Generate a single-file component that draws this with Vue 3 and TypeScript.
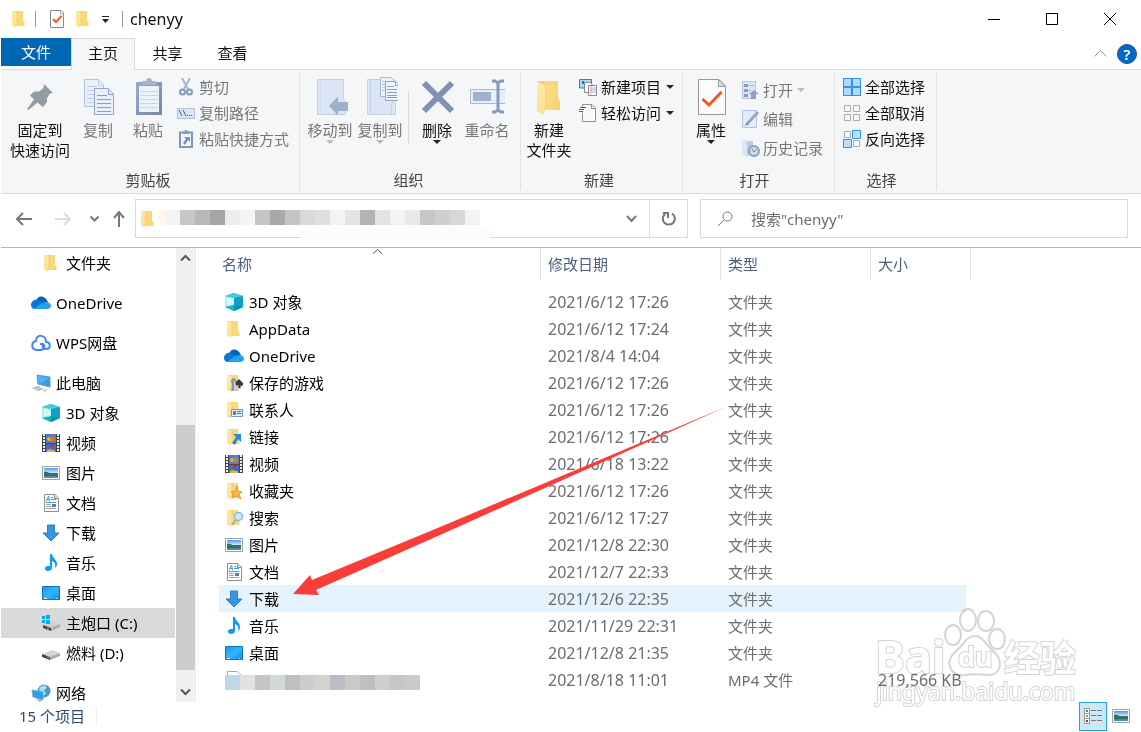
<script setup lang="ts">
import { ref } from 'vue'

interface NavItem { icon: string; label: string; root?: boolean; selected?: boolean }
interface FileRow { icon: string; name: string; date: string; type: string; size?: string; hidden?: boolean }

const tabs: string[] = ['主页', '共享', '查看']
const activeTab = ref('主页')
const query = ref('')
const selectedFile = ref('下载')

const navItems: NavItem[] = [
  { icon: 'folder', label: '文件夹' },
  { icon: 'onedrive', label: 'OneDrive', root: true },
  { icon: 'wps', label: 'WPS网盘', root: true },
  { icon: 'pc', label: '此电脑', root: true },
  { icon: 'cube', label: '3D 对象' },
  { icon: 'video', label: '视频' },
  { icon: 'picture', label: '图片' },
  { icon: 'document', label: '文档' },
  { icon: 'download', label: '下载' },
  { icon: 'music', label: '音乐' },
  { icon: 'desktop', label: '桌面' },
  { icon: 'drive-c', label: '主炮口 (C:)', selected: true },
  { icon: 'drive', label: '燃料 (D:)' },
  { icon: 'network', label: '网络', root: true },
]

const files: FileRow[] = [
  { icon: 'cube', name: '3D 对象', date: '2021/6/12 17:26', type: '文件夹' },
  { icon: 'folder', name: 'AppData', date: '2021/6/12 17:24', type: '文件夹' },
  { icon: 'onedrive', name: 'OneDrive', date: '2021/8/4 14:04', type: '文件夹' },
  { icon: 'games', name: '保存的游戏', date: '2021/6/12 17:26', type: '文件夹' },
  { icon: 'contacts', name: '联系人', date: '2021/6/12 17:26', type: '文件夹' },
  { icon: 'links', name: '链接', date: '2021/6/12 17:26', type: '文件夹' },
  { icon: 'video', name: '视频', date: '2021/6/18 13:22', type: '文件夹' },
  { icon: 'favorites', name: '收藏夹', date: '2021/6/12 17:26', type: '文件夹' },
  { icon: 'searches', name: '搜索', date: '2021/6/12 17:27', type: '文件夹' },
  { icon: 'picture', name: '图片', date: '2021/12/8 22:30', type: '文件夹' },
  { icon: 'document', name: '文档', date: '2021/12/7 22:33', type: '文件夹' },
  { icon: 'download', name: '下载', date: '2021/12/6 22:35', type: '文件夹' },
  { icon: 'music', name: '音乐', date: '2021/11/29 22:31', type: '文件夹' },
  { icon: 'desktop', name: '桌面', date: '2021/12/8 21:35', type: '文件夹' },
  { icon: 'blank', name: '', date: '2021/8/18 11:01', type: 'MP4 文件', size: '219,566 KB', hidden: true },
]

const pathMosaic: string[] = [
  '#f3f3f3', '#c6c6c6', '#b8b8b8', '#a5a5a5', '#ececec', '#f5f5f5', '#c5c5c5', '#a9a9a9', '#c5c5c5', '#d9d9d9', '#dfdfdf',
  '#f3f3f3', '#e4e4e4', '#b3b3b3', '#e3e3e3', '#f3f3f3', '#e9e9e9', '#c7c7c7', '#cfcfcf', '#d7d7d7', '#f3f3f3',
]
const nameMosaic: string[] = [
  '#bfd8e7', '#e3e2e0', '#c5c5c6', '#d3d7d7', '#c0bfbd', '#cdcdcb', '#d2d3d1', '#bcbdc4', '#c9cac7', '#c0bfbd', '#ccd0d0',
  '#c5c6c6', '#c9cacc',
]
</script>

<template>
  <svg class="symbols" width="0" height="0" aria-hidden="true">
    <defs>
      <linearGradient id="g-fold" x1="0" x2="1"><stop offset="0" stop-color="#eec468" /><stop offset=".5" stop-color="#fadb7e" /><stop offset="1" stop-color="#f8d370" /></linearGradient>
      <linearGradient id="g-flap" x1="0" y1="0" x2="0" y2="1"><stop offset="0" stop-color="#ffeaa6" /><stop offset="1" stop-color="#ffdf8d" /></linearGradient>
      <linearGradient id="g-dim" x1="0" y1="0" x2="1" y2="1"><stop offset="0" stop-color="#9aaaca" /><stop offset="1" stop-color="#7386ae" /></linearGradient>
      <linearGradient id="g-sky" x1="0" y1="0" x2="0" y2="1"><stop offset="0" stop-color="#4f97e6" /><stop offset=".5" stop-color="#d3ebf9" /><stop offset=".55" stop-color="#397c64" /><stop offset="1" stop-color="#4e92c0" /></linearGradient>
      <linearGradient id="g-screen" x1="0" y1="0" x2="1" y2="1"><stop offset="0" stop-color="#1a97f2" /><stop offset=".5" stop-color="#35b2ff" /><stop offset="1" stop-color="#1093f0" /></linearGradient>
    </defs>
    <symbol id="folder" viewBox="0 0 18 18"><path d="M4 1H13V11L14.5 12V16H6Z" fill="url(#g-fold)" /><path d="M2 0.5L6.5 2V16L5 17.5L2 15.5Z" fill="url(#g-flap)" /></symbol>
    <symbol id="cube" viewBox="0 0 18 18"><path d="M9 0L18 3V14L9 18L0 14V3Z" fill="#22b9ce" /><path d="M0 3L9 5V13L0 14Z" fill="#b4f0f3" /><path d="M9 5L18 3V14L9 12Z" fill="#0aa0c8" /><path d="M0 3L9 0L18 3L9 5Z" fill="#47cadb" /><path d="M0 14L9 12L18 14L9 18Z" fill="#18b3c4" /><path d="M9 12L18 14L9 18Z" fill="#0b91a8" /><path d="M2 5L8 6V11L2 12Z" fill="#d8f8f8" /></symbol>
    <symbol id="onedrive" viewBox="0 0 20 18"><path d="M5 7C6 3 10 1 14 4C16 5 16 7 17 8L10 12Z" fill="#0864b7" /><path d="M0 11C0 7 4 5 7 6L15 11L11 15H4C2 15 0 14 0 11Z" fill="#0878d4" /><path d="M4 15C5 12 11 9 15 8C18 8 20 10 20 12C20 14 18 15 16 15Z" fill="#22a2ed" /></symbol>
    <symbol id="wps" viewBox="0 0 20 18"><path d="M12 10C11 12 12 15 15 15C20 15 20 8 15 8C15 0 5 0 5 7C0 8 0 15 5 16H9C13 16 15 12 12 10H9" fill="none" stroke="#4286f5" stroke-width="2" /></symbol>
    <symbol id="pc" viewBox="0 0 20 18"><path d="M6 1L19 3V13L7 10Z" fill="#3a9be8" stroke="#7195b0" /><path d="M7 2L18 4L10 9H7Z" fill="#47b5f7" /><path d="M0 14L7 12L14 15L7 17Z" fill="#d6d9dc" /><path d="M3 14L9 13M6 16L11 15" stroke="#9fa7ae" /><path d="M12 16L17 15L14 18Z" fill="#c1c4c8" /></symbol>
    <symbol id="video" viewBox="0 0 18 18"><path d="M0 0H18V18H0Z" fill="#444" /><path d="M4 0H14V9H4Z" fill="#537cc8" /><path d="M4 10H14V18H4Z" fill="#426dc2" /><path d="M2 0V18M16 0V18" stroke="#eee" stroke-width="2" stroke-dasharray="2 1" /><path d="M9 2L13 3V7L10 8L7 6Z" fill="#c98125" /><path d="M5 4L7 3L9 6L6 7Z" fill="#e2bc41" /><path d="M8 9L12 10L10 14Z" fill="#be2d2a" /><path d="M5 16C9 14 11 17 13 16V18H5Z" fill="#d7ba3e" /></symbol>
    <symbol id="picture" viewBox="0 0 18 18"><path d="M.5 2.5H17.5V15.5H.5Z" fill="#fff" stroke="#a0a0a0" /><path d="M2 4H16V14H2Z" fill="url(#g-sky)" /><path d="M2 8C6 7 8 11 16 10V12H2Z" fill="#386e62" /></symbol>
    <symbol id="document" viewBox="0 0 18 18"><path d="M2.5 .5H13L16.5 4V17.5H2.5Z" fill="#fff" stroke="#8e8e8e" /><path d="M12.5 .5V4.5H16.5" fill="#ddd" stroke="#8e8e8e" /><path d="M4 7.500L6.500 2L7.500 7.500M5 5.500H8M9 3.500H11M9 5.500H14M4 8.500H14" stroke="#4a9fd0" fill="none" /><path d="M4 10.500H9M4 12.500H9M4 14.500H14" stroke="#a2a2a2" /><path d="M10 10H14V13H10Z" fill="#4b83a1" /></symbol>
    <symbol id="download" viewBox="0 0 18 18"><path d="M5.500 1H12.500V9H17L9 17L1 9H5.500Z" fill="#3795e3" stroke="#2f7fc9" /></symbol>
    <symbol id="music" viewBox="0 0 18 18"><path d="M8 0H10C10 4 15 5 15 10C15 12 14 13 13 14C14 9 12 8 10 7V14C10 16 8 17 6 17C2 17 2 12 6 12H8Z" fill="#079cf5" /></symbol>
    <symbol id="desktop" viewBox="0 0 18 18"><path d="M.5 2.500H17.500V15.500H.5Z" fill="url(#g-screen)" stroke="#0876be" /><path d="M2 14.500H5M14 14.500H15" stroke="#fff" /></symbol>
    <symbol id="drive" viewBox="0 0 18 18"><path d="M0 10L10 6L18 9L8 14Z" fill="#d5d5d5" /><path d="M0 10L8 13V16L0 13Z" fill="#454545" /><path d="M8 13L18 9V12L8 16Z" fill="#aaa" /><path d="M5 13L7 14" stroke="#67d55c" /></symbol>
    <symbol id="drive-c" viewBox="0 0 18 18"><path d="M0 11L10 7L18 10L8 15Z" fill="#d0d0d0" /><path d="M1 11L9 14V17L1 14Z" fill="#454545" /><path d="M9 14L18 10V13L9 17Z" fill="#aaa" /><path d="M0 2H3V5H0ZM4 1H8V5H4ZM0 6H3V9H0ZM4 6H8V10H4Z" fill="#00aeeb" /><path d="M5 14L7 15" stroke="#67d55c" /></symbol>
    <symbol id="network" viewBox="0 0 20 18"><circle cx="13" cy="7" r="6.500" fill="#4698ca" /><path d="M9 3L14 1L16 4L13 6L15 10L12 12L11 8L8 6Z" fill="#b2dbe8" /><path d="M1 6L12 8V16L2 13Z" fill="#26a0ed" stroke="#6aaede" /><path d="M5 15L11 16L9 18Z" fill="#9aabb6" /></symbol>
    <symbol id="games" viewBox="0 0 18 18"><use href="#folder" width="18" height="18" /><path d="M6 7C6 4 10 3 11 6C12 8 10 9 11 11L13 17H6L7 11Z" fill="#8296a9" /><path d="M9 6L12 12L13 17H9Z" fill="#c4cdd4" /><path d="M14 5L18 9C19 12 16 13 15 11L16 14H13L14 11C12 13 10 11 11 8Z" fill="#383838" /></symbol>
    <symbol id="contacts" viewBox="0 0 18 18"><use href="#folder" width="18" height="18" /><path d="M6.500 8.500H17.500V15.500H6.500Z" fill="#e2f2fb" stroke="#6b9dbd" /><path d="M8 10H11V14H8Z" fill="#5d839e" /><path d="M12 10.500H16M12 12.500H16" stroke="#2a75ab" /></symbol>
    <symbol id="links" viewBox="0 0 18 18"><use href="#folder" width="18" height="18" /><path d="M8 6H16V14L13 11L10 17L7 15L11 9Z" fill="#258bda" /></symbol>
    <symbol id="favorites" viewBox="0 0 18 18"><use href="#folder" width="18" height="18" /><path d="M12 4L13 9L17 10L14 12L16 17L11 14L7 16L8 12L6 10L10 9Z" fill="#ffb547" stroke="#ef9532" /></symbol>
    <symbol id="searches" viewBox="0 0 18 18"><use href="#folder" width="18" height="18" /><circle cx="13.500" cy="7.500" r="4" fill="#cdeaf8" stroke="#8eb8d0" stroke-width="1.500" /><path d="M11 11L7 16" stroke="#9ba7ae" stroke-width="2" /></symbol>
    <symbol id="blank" viewBox="0 0 18 18"><path d="M2.500 17V.5H12L16 4" fill="#fff" stroke="#a9a9a9" /></symbol>
    <symbol id="check" viewBox="0 0 18 18"><path d="M2.500 .5H13L15.500 3V17.500H2.500Z" fill="#fff" stroke="#8b8b8b" /><path d="M12.500 1V4H15" fill="none" stroke="#aaa" /><path d="M5 9L8 12L13.500 6" fill="none" stroke="#f1591c" stroke-width="2" /></symbol>

    <symbol id="cut" viewBox="0 0 18 18"><path d="M5 0L11 11M13 0L7 11" stroke="#a7b4cc" stroke-width="2" /><circle cx="5.500" cy="14" r="2.500" fill="none" stroke="#8899bb" stroke-width="2" /><circle cx="12.500" cy="14" r="2.500" fill="none" stroke="#8899bb" stroke-width="2" /></symbol>
    <symbol id="path" viewBox="0 0 18 18"><path d="M.5 4.500H17.500V14.500H.5Z" fill="#dae5f5" stroke="#b3c2dc" /><path d="M2 6L5 12M6 6L9 12M10 11.500H11M12 11.500H13M14 11.500H15" stroke="#4e6187" stroke-width="1" /></symbol>
    <symbol id="shortcut" viewBox="0 0 18 18"><path d="M3 2.500H15V17H3Z" fill="#f3f7fd" stroke="#8294b8" stroke-width="2" /><path d="M6 1H8V0H10V1H12V4H6Z" fill="#8b9cbe" /><path d="M7 7H13V12L11 10L8 15L6 13L9 9Z" fill="#7c8fb6" /></symbol>
    <symbol id="new-item" viewBox="0 0 18 18"><path d="M.5 1.500H12.500V10H.5Z" fill="#a9d8f1" stroke="#2f86b5" /><path d="M3 3H5V6H3Z" fill="#26719d" /><path d="M5.500 4.500H11.500L13 6V14.500H5.500Z" fill="#fff" stroke="#8a8a8a" /><path d="M9.500 7.500H17.500V17.500H9.500Z" fill="#fff" stroke="#8a8a8a" /><path d="M11 10H17M11 12H17M11 14H17" stroke="#a7b8e2" /><path d="M12 8V17" stroke="#f0a8a0" /></symbol>
    <symbol id="easy" viewBox="0 0 18 18"><path d="M3.500 .5H13L16.500 4V17.500H3.500Z" fill="#fafafa" stroke="#909090" /><path d="M12.500 1V4.500H16" fill="none" stroke="#909090" /><path d="M1 3.500H7M0 5.500H5M-1 7.500H4" stroke="#f5f6f7" stroke-width="2" /><path d="M1 3.500H7M0 5.500H5M0 7.500H4" stroke="#1974b7" /></symbol>
    <symbol id="open" viewBox="0 0 18 18"><path d="M.5 .5H13.500V17.500H.5Z" fill="#dde6f4" stroke="#b7c3d9" /><path d="M2 3H6V6H2ZM2 8H6V11H2ZM2 13H6V16H2Z" fill="#8799be" /><path d="M7 4.500H12M7 9.500H9" stroke="#a5b4d0" /><path d="M12 9L17 13H14V18H9V13H7Z" fill="#8d9fc2" /></symbol>
    <symbol id="edit" viewBox="0 0 18 18"><path d="M.5 .5H14.500V17.500H.5Z" fill="#e4ecf8" stroke="#b4c2da" /><path d="M16 2L5 14" stroke="#92a6ca" stroke-width="3" /><path d="M4 13L3 16L7 14Z" fill="#6f85af" /></symbol>
    <symbol id="history" viewBox="0 0 18 18"><path d="M0 0L5 2V18L0 16Z" fill="#dce6f5" /><path d="M5 2H11V7L7 17H5Z" fill="#bccbe4" /><circle cx="12" cy="12" r="5" fill="#ced9eb" stroke="#8c9fc4" stroke-width="2" /><path d="M10 10L12 13L15 10" fill="none" stroke="#6e83ae" /></symbol>
    <symbol id="all" viewBox="0 0 18 18"><path d="M0 0H18V18H0Z" fill="#3194e4" /><path d="M1 1H8V8H1ZM10 1H17V8H10ZM1 10H8V17H1ZM10 10H17V17H10Z" fill="#afdbfb" /></symbol>
    <symbol id="none" viewBox="0 0 18 18"><path d="M1.500 1.500H7.500V7.500H1.500ZM10.500 1.500H16.500V7.500H10.500ZM1.500 10.500H7.500V16.500H1.500ZM10.500 10.500H16.500V16.500H10.500Z" fill="#fafafa" stroke="#aaa" /></symbol>
    <symbol id="invert" viewBox="0 0 18 18"><path d="M1.500 1.500H7.500V7.500H1.500ZM10.500 10.500H16.500V16.500H10.500Z" fill="#fafafa" stroke="#aaa" /><path d="M9.500 .5H17.500V8.500H9.500ZM.5 9.500H8.500V17.500H.5Z" fill="#b9e0fc" stroke="#3194e4" /></symbol>

    <symbol id="pin" viewBox="0 0 36 38" overflow="visible"><path d="M22 7L31 16L28 16.500L25 21V25L21 30L15.500 25.500L6.500 33L5 32L12 22.500L8 18.500L12 14.500H17L21.500 11Z" fill="#919ca3" /></symbol>
    <symbol id="copy" viewBox="0 0 36 38"><path d="M4.500 2.500H18L23.500 8V29.500H4.500Z" fill="#e9f0fa" stroke="#b3c2dc" /><path d="M18.500 2.500V8.500H23.500M7 9.500H17M7 13.500H17M7 17.500H17M7 21.500H17M7 25.500H17" fill="none" stroke="#c2cfe4" /><path d="M14.500 11.500H28L33.500 17V37.500H14.500Z" fill="#e9f0fa" stroke="#94a7ca" /><path d="M28.500 11.500V17.500H33.500M17 18.500H27M17 22.500H31M17 26.500H31M17 30.500H31M17 34.500H31" fill="none" stroke="#8a9fc7" /></symbol>
    <symbol id="paste" viewBox="0 0 36 38"><path d="M6 5H32V38H6Z" fill="url(#g-dim)" /><path d="M9 9H29V35H9Z" fill="#eaf2fc" /><path d="M10 14.500H28M10 18.500H28M10 22.500H28M10 26.500H28M10 30.500H28" stroke="#c8d5e8" /><path d="M12 4H16C16 0 22 0 22 4H26V8H12Z" fill="#a6b3cc" /></symbol>
    <symbol id="move" viewBox="0 0 36 38" overflow="visible"><path d="M5.500 2.500H31.500V22L33.500 25V37.500H5.500Z" fill="#dbe5f5" stroke="#c3d1e7" /><path d="M8.500 3V37" stroke="#cfdbed" /><path d="M17 29L26 19.500V25H37V34H26V38.500Z" fill="#9eafcd" /></symbol>
    <symbol id="copy-to" viewBox="0 0 36 38" overflow="visible"><path d="M5.500 2.500H31.500V22L33.500 25V37.500H5.500Z" fill="#dbe5f5" stroke="#c3d1e7" /><path d="M8.500 3V37M29.500 37V27L31.500 25" fill="none" stroke="#c3d1e7" /><path d="M18.500 .5H29L32.500 4V19.500H18.500Z" fill="#edf3fb" stroke="#a8b9d5" /><path d="M20 4.500H28M20 7.500H28M20 10.500H28M20 13.500H28" stroke="#b7c5dc" /><path d="M23.500 4.500H34L37.500 8V23.500H23.500Z" fill="#edf3fb" stroke="#8fa3c8" /><path d="M33.500 4.500V8.500H37.500M25 9.500H32M25 12.500H35M25 15.500H35M25 18.500H35M25 20.500H35" fill="none" stroke="#8fa3c8" /></symbol>
    <symbol id="delete" viewBox="0 0 36 38"><path d="M5 6L33 34M33 6L5 34" stroke="#7f91b5" stroke-width="6" /></symbol>
    <symbol id="rename" viewBox="0 0 36 38" overflow="visible"><path d="M1.500 12.500H36.500V26.500H1.500Z" fill="#e7effa" stroke="#a9b9d5" /><path d="M4 15H22V24H4Z" fill="#9fafcd" /><path d="M23 4H26L29 6L32 4H35M23 35H26L29 33L32 35H35M29 6V33" fill="none" stroke="#8798bb" stroke-width="3" /></symbol>
    <symbol id="new-folder" viewBox="0 0 36 38"><path d="M6 4H27V21L29 24V33H13Z" fill="url(#g-fold)" /><path d="M6 4L14 9V33L12.500 38L6 34Z" fill="url(#g-flap)" /></symbol>
    <symbol id="properties" viewBox="0 0 36 38"><path d="M5.500 2.500H26L32.500 9V37.500H5.500Z" fill="#fbfbfb" stroke="#999" /><path d="M25.500 2.500V9.500H32.500Z" fill="#ddd" stroke="#999" /><path d="M9.500 22L16 28L28.500 15" fill="none" stroke="#f1591c" stroke-width="3" /></symbol>
  </svg>

  <div class="window">
    <header class="titlebar">
      <svg class="icon"><use href="#folder" /></svg>
      <span class="bar"></span>
      <button class="plain" aria-label="属性"><svg class="icon"><use href="#check" /></svg></button>
      <button class="plain" aria-label="新建文件夹"><svg class="icon"><use href="#folder" /></svg></button>
      <button class="plain qat" aria-label="自定义快速访问工具栏"><svg width="9" height="7"><path d="M1 .5H8" stroke="#222" /><path d="M1 3H8L4.500 7Z" fill="#222" /></svg></button>
      <span class="bar"></span>
      <h1>chenyy</h1>
      <div class="window-buttons">
        <button class="plain" aria-label="最小化"><svg width="12" height="12"><path d="M0 6.500H12" stroke="#000" /></svg></button>
        <button class="plain" aria-label="最大化"><svg width="12" height="12"><path d="M.5 .5H11.500V11.500H.5Z" fill="none" stroke="#000" /></svg></button>
        <button class="plain" aria-label="关闭"><svg width="12" height="12"><path d="M0 0L12 12M12 0L0 12" stroke="#000" /></svg></button>
      </div>
    </header>

    <nav class="tabs" aria-label="功能区">
      <button class="file-tab">文件</button>
      <button v-for="tab in tabs" :key="tab" class="tab" :class="{ active: tab === activeTab }" @click="activeTab = tab">{{ tab }}</button>
      <div class="tab-tools">
        <button class="plain" aria-label="折叠功能区"><svg width="13" height="7"><path d="M.5 6.500L6.500 .5L12.500 6.500" fill="none" stroke="#999" /></svg></button>
        <button class="help" aria-label="帮助">?</button>
      </div>
    </nav>

    <section class="ribbon">
      <div class="group clipboard">
        <div class="tools">
          <button class="large wide"><svg><use href="#pin" /></svg><span>固定到<br />快速访问</span></button>
          <button class="large dim"><svg><use href="#copy" /></svg><span>复制</span></button>
          <button class="large dim"><svg><use href="#paste" /></svg><span>粘贴</span></button>
          <div class="small-list">
            <button class="small dim"><svg class="icon"><use href="#cut" /></svg>剪切</button>
            <button class="small dim"><svg class="icon"><use href="#path" /></svg>复制路径</button>
            <button class="small dim"><svg class="icon"><use href="#shortcut" /></svg>粘贴快捷方式</button>
          </div>
        </div>
        <h2>剪贴板</h2>
      </div>
      <div class="group organize">
        <div class="tools">
          <button class="large dim drop"><svg><use href="#move" /></svg><span>移动到</span></button>
          <button class="large dim drop"><svg><use href="#copy-to" /></svg><span>复制到</span></button>
          <span class="divider"></span>
          <button class="large drop"><svg><use href="#delete" /></svg><span>删除</span></button>
          <button class="large dim"><svg><use href="#rename" /></svg><span>重命名</span></button>
        </div>
        <h2>组织</h2>
      </div>
      <div class="group">
        <div class="tools">
          <button class="large"><svg><use href="#new-folder" /></svg><span>新建<br />文件夹</span></button>
          <div class="small-list">
            <button class="small more"><svg class="icon"><use href="#new-item" /></svg>新建项目</button>
            <button class="small more"><svg class="icon"><use href="#easy" /></svg>轻松访问</button>
          </div>
        </div>
        <h2>新建</h2>
      </div>
      <div class="group roomy">
        <div class="tools">
          <button class="large drop"><svg><use href="#properties" /></svg><span>属性</span></button>
          <div class="small-list loose">
            <button class="small dim more"><svg class="icon"><use href="#open" /></svg>打开</button>
            <button class="small dim"><svg class="icon"><use href="#edit" /></svg>编辑</button>
            <button class="small dim"><svg class="icon"><use href="#history" /></svg>历史记录</button>
          </div>
        </div>
        <h2>打开</h2>
      </div>
      <div class="group roomy">
        <div class="tools">
          <div class="small-list">
            <button class="small"><svg class="icon"><use href="#all" /></svg>全部选择</button>
            <button class="small"><svg class="icon"><use href="#none" /></svg>全部取消</button>
            <button class="small"><svg class="icon"><use href="#invert" /></svg>反向选择</button>
          </div>
        </div>
        <h2>选择</h2>
      </div>
    </section>

    <section class="address-row">
      <div class="history">
        <button class="plain" aria-label="后退"><svg width="16" height="14"><path d="M7 1L1 7L7 13M1 7H16" fill="none" stroke="#777" stroke-width="2" /></svg></button>
        <button class="plain" aria-label="前进"><svg width="16" height="14"><path d="M9 1L15 7L9 13M15 7H0" fill="none" stroke="#ddd" stroke-width="2" /></svg></button>
        <button class="plain recent" aria-label="最近浏览的位置"><svg width="9" height="6"><path d="M.5 .5L4.500 4.500L8.500 .5" fill="none" stroke="#777" stroke-width="2" /></svg></button>
        <button class="plain up" aria-label="上移"><svg width="12" height="16"><path d="M1 7L6 1L11 7M6 1V16" fill="none" stroke="#777" stroke-width="2" /></svg></button>
      </div>
      <div class="address">
        <svg class="icon"><use href="#folder" /></svg>
        <div class="mosaic path-mosaic"><i class="cream"></i><i v-for="(c, i) in pathMosaic" :key="i" :style="{ background: c }"></i></div>
        <button class="plain dropdown" aria-label="以前的位置"><svg width="11" height="8"><path d="M1 1L5.500 6L10 1" fill="none" stroke="#777" stroke-width="2" /></svg></button>
        <button class="plain refresh" aria-label="刷新"><svg width="14" height="16"><path d="M3 3A6 6 0 1 0 10 2.500M1 2H6V7" fill="none" stroke="#777" stroke-width="2" /></svg></button>
        <span class="smear"></span>
      </div>
      <label class="search">
        <svg width="15" height="16"><circle cx="9.500" cy="5.500" r="4.500" fill="none" stroke="#777" /><path d="M6 9L0 15" stroke="#777" /></svg>
        <input v-model="query" type="text" aria-label="搜索" placeholder="搜索&quot;chenyy&quot;" />
      </label>
    </section>

    <main class="content">
      <nav class="sidebar" aria-label="导航窗格">
        <a v-for="item in navItems" :key="item.label" href="#" :class="{ root: item.root, selected: item.selected }">
          <svg class="icon"><use :href="'#' + item.icon" /></svg>{{ item.label }}
        </a>
      </nav>
      <div class="scrollbar">
        <button class="plain" aria-label="向上滚动"><svg width="11" height="8"><path d="M1 6.500L5.500 2L10 6.500" fill="none" stroke="#555" stroke-width="2" /></svg></button>
        <span class="track-top"></span><span class="thumb"></span><span class="track-end"></span>
        <button class="plain" aria-label="向下滚动"><svg width="11" height="8"><path d="M1 1.500L5.500 6L10 1.500" fill="none" stroke="#555" stroke-width="2" /></svg></button>
      </div>
      <div class="files">
        <table>
          <colgroup><col class="c-name" /><col class="c-date" /><col class="c-type" /><col class="c-size" /></colgroup>
          <thead>
            <tr>
              <th>名称<svg class="sort" width="9" height="5"><path d="M0 4.500L4.500 .5L9 4.500" fill="none" stroke="#555" /></svg></th>
              <th>修改日期</th><th>类型</th><th>大小</th>
            </tr>
          </thead>
          <tbody>
            <tr v-for="file in files" :key="file.icon" :class="{ selected: !file.hidden && file.name === selectedFile }" @click="selectedFile = file.name">
              <td>
                <div class="name">
                  <svg class="icon" :class="{ cloud: file.icon === 'onedrive' }"><use :href="'#' + file.icon" /></svg>{{ file.name }}
                  <div v-if="file.hidden" class="mosaic name-mosaic"><i v-for="(c, i) in nameMosaic" :key="i" :style="{ background: c }"></i></div>
                </div>
              </td>
              <td class="figures">{{ file.date }}</td><td>{{ file.type }}</td><td class="figures">{{ file.size }}</td>
            </tr>
          </tbody>
        </table>
      </div>
    </main>

    <footer class="status">
      <span class="count">15 个项目</span>
      <div class="views">
        <button class="view on" aria-label="详细信息"><svg width="18" height="16"><path d="M.5 .5H5.500V15.500H.5ZM.5 5.500H5.500M.5 10.500H5.500" fill="#fff" stroke="#999" /><path d="M2 3H4" stroke="#4287bd" stroke-width="2" /><path d="M2 8H4" stroke="#a49a2e" stroke-width="2" /><path d="M2 13H4" stroke="#b22f25" stroke-width="2" /><path d="M7 2.500H12M13 2.500H18M7 7.500H12M13 7.500H18M7 12.500H12M13 12.500H18" stroke="#777" /></svg></button>
        <button class="view" aria-label="大图标"><svg class="icon"><use href="#picture" /></svg></button>
      </div>
    </footer>

    <svg class="watermark" width="210" height="106" viewBox="0 0 210 106">
      <g class="mark-text">
        <text x="2" y="67" font-size="45" font-weight="700">Bai</text>
        <text x="131" y="66" font-size="36" font-weight="700">经验</text>
        <text x="3" y="94" font-size="23">jingyan.baidu.com</text>
      </g>
      <g fill="#fff" stroke="#d4d4d4" stroke-width="2">
        <ellipse cx="80" cy="29" rx="8" ry="10" /><ellipse cx="95" cy="14" rx="8" ry="11" /><ellipse cx="113" cy="15" rx="8" ry="10" /><ellipse cx="124" cy="33" rx="8" ry="10" />
        <path d="M102 30C110 30 112 38 119 44C132 55 128 69 115 69C107 69 100 67 92 69C77 71 71 56 82 46C91 39 93 30 102 30Z" />
      </g>
      <g class="mark-text"><text x="85" y="61" font-size="27" font-weight="700">du</text></g>
    </svg>
    <svg class="pointer" width="436" height="191" viewBox="0 0 436 191"><path d="M0 188L17 169L19 174L147 121L435 0L147 129L23 184L26 189Z" fill="#fb3d3a" /></svg>
  </div>
</template>

<style>
body { margin: 0; background: #fff; }
</style>

<style scoped>
.window {
  position: relative;
  display: flex;
  flex-direction: column;
  box-sizing: border-box;
  height: 100vh;
  padding-left: 1px;
  overflow: hidden;
  background: #fff;
  color: #111;
  font: 15px/20px "Noto Sans", "Noto Sans CJK SC", sans-serif;
}
.symbols { position: absolute; }
button { padding: 0; border: 0; background: none; color: inherit; font: inherit; }
svg { flex: none; }
.plain { display: flex; align-items: center; justify-content: center; }
.icon { display: block; width: 18px; height: 18px; }

.titlebar { display: flex; flex: none; align-items: center; height: 38px; padding-left: 9px; }
.titlebar .bar { width: 1px; height: 16px; margin: 0 12px 0 7px; background: #999; }
.titlebar .plain { margin-right: 8px; }
.titlebar .qat { width: 10px; margin-right: 5px; }
.titlebar .qat + .bar { margin-right: 7px; }
h1 { margin: 0; font-size: 16px; font-weight: 400; }
.window-buttons { display: flex; align-self: stretch; margin-left: auto; padding-right: 2px; }
.titlebar .window-buttons .plain { width: 58px; margin: 0; }

.tabs { display: flex; flex: none; height: 31px; border-bottom: 1px solid #d9dadb; }
.file-tab { align-self: flex-start; width: 70px; height: 28px; background: #0067b3; color: #fff; }
.tab { box-sizing: border-box; width: 65px; height: 32px; padding-bottom: 3px; border: 1px solid transparent; border-bottom: 0; }
.tab.active { width: 64px; border-color: #d9dadb; background: #f5f6f7; }
.tab-tools { display: flex; align-items: center; gap: 10px; margin-left: auto; padding-right: 4px; }
.help { width: 20px; height: 20px; border: 1px solid #17538f; border-radius: 50%; background: #0369c9; color: #fff; font-weight: 600; line-height: 18px; }

.ribbon { display: flex; flex: none; height: 123px; border-bottom: 1px solid #d9dadb; background: #f5f6f7; }
.group { display: flex; flex-direction: column; margin: 2px 0 3px; padding: 0 8px 0 3px; border-right: 1px solid #e1e2e3; }
.group.clipboard { padding: 0 10px 0 6px; }
.group.organize { padding-left: 5px; }
.group.roomy { padding-right: 11px; }
.tools { display: flex; flex: 1; }
h2 { margin: 0; color: #444; font-size: 15px; font-weight: 400; line-height: 20px; text-align: center; }
.large { position: relative; display: flex; flex-direction: column; align-items: center; gap: 5px; width: 50px; padding-top: 5px; white-space: nowrap; }
.large.wide { width: 66px; }
.large svg { width: 36px; height: 38px; }
.large.drop::after, .small.more::after { content: ""; border: 4px solid transparent; border-top-color: #222; border-bottom: 0; }
.large.drop::after { margin-top: -5px; }
.dim { color: #777; }
.large.dim.drop::after, .small.dim.more::after { border-top-color: #bbb; }
.divider { align-self: flex-start; width: 1px; height: 54px; margin: 19px 3px 0; background: #ddd; }
.small-list { display: flex; flex-direction: column; align-items: flex-start; padding: 2px 0 0 5px; }
.clipboard .small-list { padding-left: 4px; }
.small { display: flex; align-items: center; gap: 4px; height: 26px; white-space: nowrap; }
.small.more::after { margin-left: 1px; }
.small-list.loose { padding: 3px 0 0 6px; }
.loose .small { gap: 3px; height: 29px; }

.address-row { display: flex; flex: none; align-items: center; box-sizing: border-box; height: 54px; padding: 0 13px 4px 0; border-bottom: 1px solid #b7b7b7; }
.history { display: flex; flex: none; width: 134px; }
.history .plain { width: 39px; padding-left: 7px; }
.history .recent { width: 28px; padding-left: 2px; }
.history .up { width: 24px; padding: 0; }
.address { position: relative; display: flex; flex: 553 1 553px; align-items: center; box-sizing: border-box; min-width: 0; height: 39px; padding-left: 3px; border: 1px solid #d9d9d9; }
.mosaic { display: flex; }
.mosaic i { width: 15px; height: 15px; }
.mosaic .cream { width: 7px; border-radius: 7px 0 0 7px; background: #fff7e8; }
.path-mosaic { margin: 0 0 2px 1px; }
.dropdown { width: 36px; margin-left: auto; }
.refresh { align-self: stretch; width: 38px; border-left: 1px solid #d9d9d9; }
.smear { position: absolute; top: 26px; left: 165px; width: 195px; height: 14px; border-radius: 0 0 14px 0; background: #fcfcfc; }
.search { display: flex; flex: 428 1 428px; align-items: center; box-sizing: border-box; min-width: 0; height: 39px; margin-left: 12px; padding-left: 17px; border: 1px solid #d9d9d9; }
.search input { flex: 1; min-width: 0; margin-left: 18px; padding: 0; border: 0; outline: 0; background: none; font: inherit; }
.search input::placeholder { color: #6d6d6d; opacity: 1; }

.content { display: flex; flex: 1; min-height: 0; }
.sidebar { flex: none; width: 174px; overflow: hidden; }
.sidebar a { display: flex; align-items: center; gap: 6px; height: 30px; padding-left: 41px; color: #000; text-decoration: none; white-space: nowrap; }
.sidebar a.root { gap: 5px; margin-top: 10px; padding-left: 30px; }
.sidebar .root .icon { width: 20px; }
.sidebar a.selected { background: #d9d9d9; }
.scrollbar { display: flex; flex: none; flex-direction: column; width: 20px; margin-left: 1px; border-right: 2px solid #fff; background: #f0f0f0; }
.scrollbar .plain { width: 19px; height: 20px; }
.track-top { flex: 157; }
.thumb { flex: 245; width: 19px; background: #cdcdcd; }
.track-end { flex: 12; }
.files { flex: 1; min-width: 0; padding-left: 20px; border-left: 1px solid #f5f5f5; overflow: hidden; }
table { width: 752px; border-collapse: separate; border-spacing: 0; table-layout: fixed; }
.c-name { width: 322px; }
.c-date { width: 180px; }
.c-type { width: 150px; }
.c-size { width: 100px; }
th { position: relative; height: 32px; padding: 0 0 0 7px; border-right: 1px solid #e2e2e2; color: #4c607a; font-weight: 400; text-align: left; }
th:first-child { padding-left: 3px; }
.sort { position: absolute; top: 1px; left: 154px; }
tbody::before { display: block; height: 8px; content: ""; }
td { height: 27px; padding: 0 0 0 7px; color: #6d6d6d; white-space: nowrap; }
td.figures { font-size: 16px; }
td:first-child { padding-left: 6px; color: #000; }
td:last-child { padding-right: 5px; border-right: 5px solid transparent; background-clip: padding-box; text-align: right; }
.selected td { background-color: #e5f3ff; }
.name { display: flex; position: relative; align-items: center; gap: 6px; }
.name .cloud { width: 20px; margin: 0 -1px; }
.name-mosaic { position: absolute; top: 4px; left: 0; }

.status { display: flex; flex: none; align-items: center; box-sizing: border-box; height: 30px; padding: 0 8px 2px 18px; color: #2b4a6f; }
.count { padding-right: 11px; border-right: 1px solid #eee; }
.views { display: flex; gap: 2px; margin-left: auto; }
.view { display: flex; align-items: center; justify-content: center; box-sizing: border-box; width: 24px; height: 29px; }
.view.on { width: 28px; border: 1px solid #26a0da; background: #cbe8f6; }

.watermark { position: absolute; top: 606px; left: 873px; pointer-events: none; mix-blend-mode: multiply; }
.mark-text { fill: #fff; stroke: #d4d4d4; stroke-width: 2px; paint-order: stroke; }
.pointer { position: absolute; top: 406px; left: 293px; pointer-events: none; }
</style>
